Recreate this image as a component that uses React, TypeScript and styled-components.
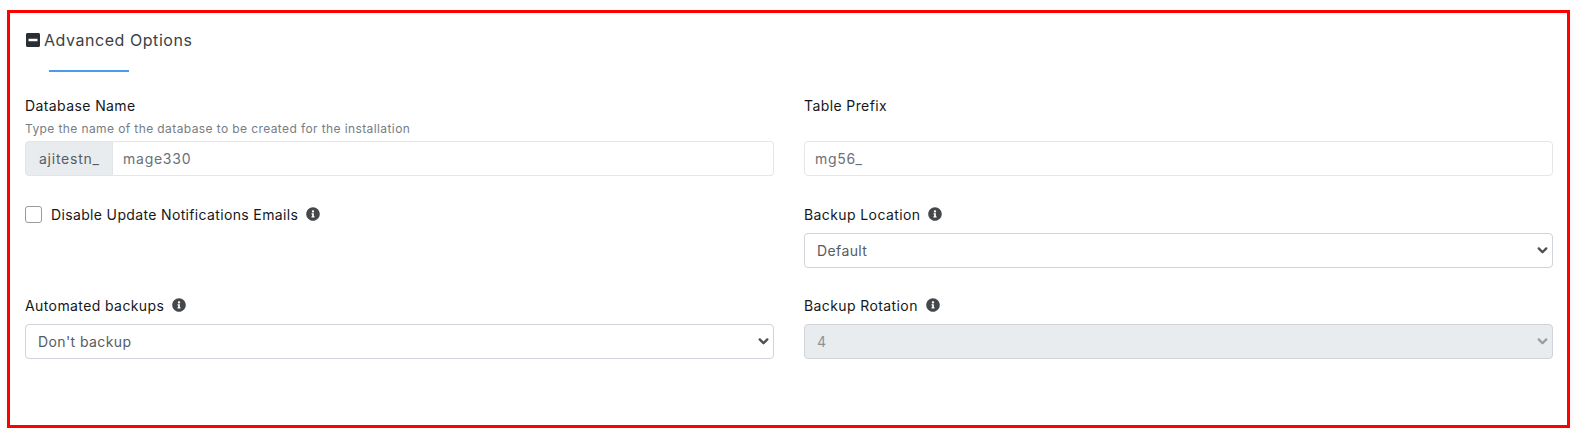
import { createGlobalStyle } from "styled-components";
import styled from "styled-components";
import { FaInfoCircle, FaMinusSquare } from "react-icons/fa";

const GlobalStyle = createGlobalStyle`
  html, body {
    margin: 0;
    padding: 0;
    background: #ffffff;
    font-family: "Inter", "Liberation Sans", sans-serif;
  }
`;

const chevron = (color: string) =>
  `url("data:image/svg+xml,%3csvg xmlns='http://www.w3.org/2000/svg' viewBox='0 0 16 16'%3e%3cpath fill='none' stroke='${color}' stroke-linecap='round' stroke-linejoin='round' stroke-width='3.4' d='M2.5 5l5.5 5.5 5.5-5.5'/%3e%3c/svg%3e")`;

const Frame = styled.section`
  box-sizing: border-box;
  width: 1563px;
  height: 418px;
  margin: 10px 0 0 7px;
  padding: 16px 14px 0 15px;
  border: 3px solid #ff0000;
  box-shadow: 0 4px 10px rgba(0, 0, 0, 0.06);
`;

const Heading = styled.h2`
  display: flex;
  align-items: center;
  gap: 4px;
  margin: 0;
  height: 22px;
  font-size: 16px;
  font-weight: 400;
  letter-spacing: 0.55px;
  color: #3a3f44;
  svg {
    font-size: 16px;
    color: #2b2f33;
    margin-right: -1px;
  }
`;

const Underline = styled.div`
  width: 80px;
  height: 2px;
  margin: 19px 0 0 24px;
  background: #4a9af0;
`;

const Form = styled.div`
  display: grid;
  grid-template-columns: 749px 749px;
  column-gap: 30px;
  margin-top: 23px;
  font-size: 14px;
  letter-spacing: 0.4px;
`;

const Field = styled.div<{ $height: number }>`
  height: ${(p) => p.$height}px;
  display: flex;
  flex-direction: column;
`;

const Label = styled.label`
  display: flex;
  align-items: center;
  gap: 8px;
  height: 20px;
  color: #15181b;
  svg {
    font-size: 14px;
    color: #45484b;
  }
`;

const Hint = styled.div`
  height: 16px;
  margin-top: 6px;
  font-size: 12px;
  line-height: 16px;
  color: #767d84;
`;

const Spacer = styled.div<{ $size: number }>`
  height: ${(p) => p.$size}px;
`;

const InputGroup = styled.div`
  display: flex;
  height: 35px;
  margin-top: 4px;
`;

const Prefix = styled.span`
  box-sizing: border-box;
  display: flex;
  align-items: center;
  width: 88px;
  padding-left: 13px;
  border: 1px solid #e2e5e8;
  border-radius: 4px 0 0 4px;
  background: #e9ecef;
  letter-spacing: 0.75px;
  color: #565c63;
`;

const Input = styled.input<{ $joined?: boolean }>`
  box-sizing: border-box;
  flex: 1;
  min-width: 0;
  height: 35px;
  padding: 0 10px;
  border: 1px solid #e4e7ea;
  border-left-width: ${(p) => (p.$joined ? 0 : 1)}px;
  border-radius: ${(p) => (p.$joined ? "0 4px 4px 0" : "4px")};
  outline: none;
  font-family: inherit;
  font-size: 14px;
  letter-spacing: 0.75px;
  color: #6a7077;
`;

const Select = styled.select`
  box-sizing: border-box;
  width: 100%;
  height: 35px;
  padding: 0 12px;
  appearance: none;
  border: 1px solid #ced4da;
  border-radius: 4px;
  background-color: #ffffff;
  background-image: ${chevron("%23494f55")};
  background-repeat: no-repeat;
  background-position: right 4px center;
  background-size: 11px 11px;
  font-family: inherit;
  font-size: 14px;
  letter-spacing: 0.4px;
  color: #565c63;
  &:disabled {
    opacity: 1;
    background-color: #e9ecef;
    background-image: ${chevron("%23999da1")};
    color: #8c9196;
  }
`;

const CheckRow = styled.label`
  display: flex;
  align-items: center;
  gap: 8px;
  height: 18px;
  margin-top: 1px;
  letter-spacing: 0.35px;
  color: #15181b;
  svg {
    font-size: 14px;
    color: #45484b;
  }
`;

const CheckBox = styled.input.attrs({ type: "checkbox" })`
  box-sizing: border-box;
  appearance: none;
  width: 17px;
  height: 17px;
  margin: 0 1px 0 0;
  border: 1px solid #9a9a9a;
  border-radius: 3px;
  background: #ffffff;
`;

export default function App() {
  return (
    <>
      <GlobalStyle />
      <Frame>
        <Heading>
          <FaMinusSquare />
          Advanced Options
        </Heading>
        <Underline />
        <Form>
          <Field $height={109}>
            <Label>Database Name</Label>
            <Hint>Type the name of the database to be created for the installation</Hint>
            <InputGroup>
              <Prefix>ajitestn_</Prefix>
              <Input $joined defaultValue="mage330" />
            </InputGroup>
          </Field>
          <Field $height={109}>
            <Label>Table Prefix</Label>
            <Spacer $size={22} />
            <InputGroup>
              <Input defaultValue="mg56_" />
            </InputGroup>
          </Field>
          <Field $height={91}>
            <CheckRow>
              <CheckBox />
              Disable Update Notifications Emails
              <FaInfoCircle />
            </CheckRow>
          </Field>
          <Field $height={91}>
            <Label>
              Backup Location
              <FaInfoCircle />
            </Label>
            <Spacer $size={9} />
            <Select defaultValue="default">
              <option value="default">Default</option>
            </Select>
          </Field>
          <Field $height={64}>
            <Label>
              Automated backups
              <FaInfoCircle />
            </Label>
            <Spacer $size={9} />
            <Select defaultValue="none">
              <option value="none">Don't backup</option>
            </Select>
          </Field>
          <Field $height={64}>
            <Label>
              Backup Rotation
              <FaInfoCircle />
            </Label>
            <Spacer $size={9} />
            <Select disabled defaultValue="4">
              <option value="4">4</option>
            </Select>
          </Field>
        </Form>
      </Frame>
    </>
  );
}
